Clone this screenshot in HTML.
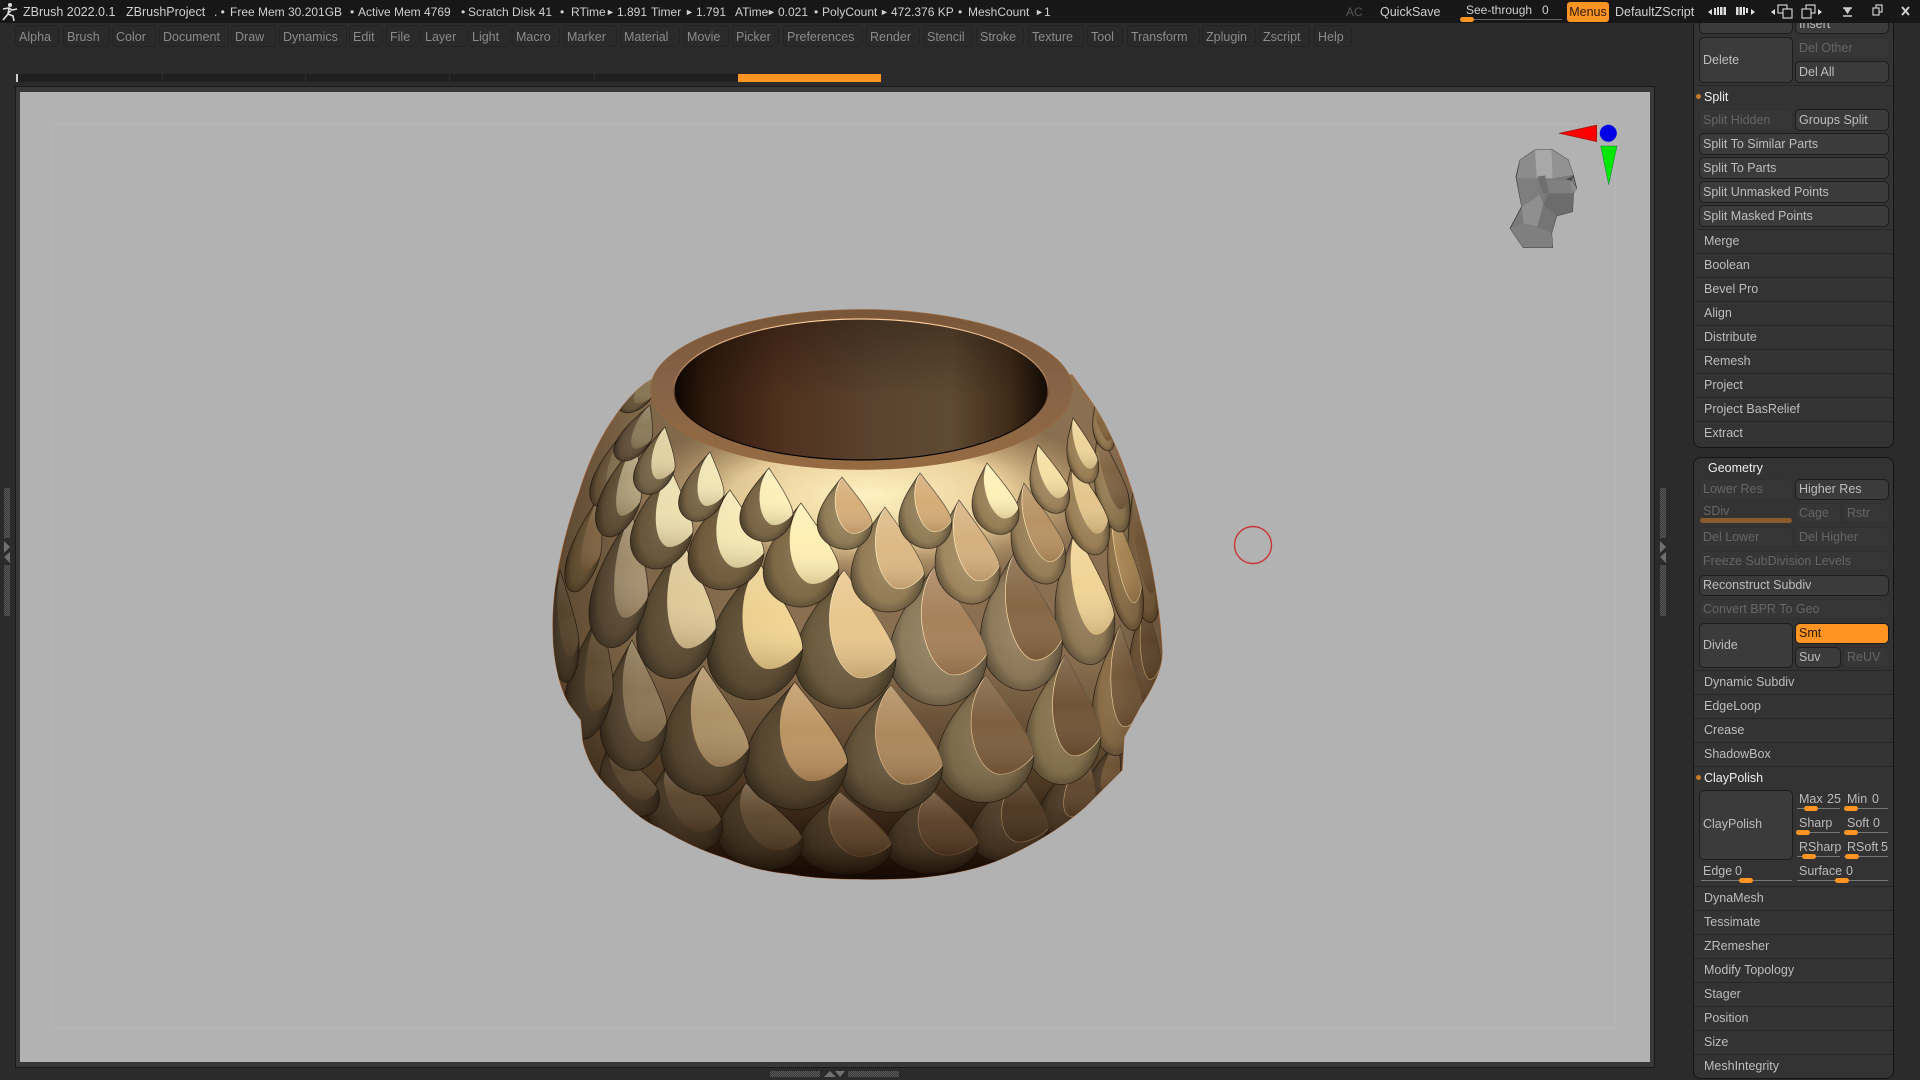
<!DOCTYPE html>
<html><head><meta charset="utf-8"><title>ZBrush</title>
<style>
html,body{margin:0;padding:0;width:1920px;height:1080px;overflow:hidden;background:#2b2b2b;font-family:"Liberation Sans",sans-serif;font-size:12.5px}
div,span{position:absolute;box-sizing:border-box;white-space:nowrap}
.t{color:#cfcfcf;top:3px;line-height:18px;font-size:12px}
.a{font-size:9px}
.m{top:25px;height:22px;background:#2a2a2a;border:1px solid #232323;border-radius:4px;color:#8b8b8b;line-height:22px;padding-left:3px;font-size:12.5px}
.b{background:#3b3b3b;border:1px solid #1c1c1c;border-radius:5px;color:#bdbdbd;padding-left:3px;line-height:20px}
.d{background:#363636;border:1px solid #303030;border-radius:5px;color:#666;padding-left:3px;line-height:20px}
.r{left:1694px;width:199px;height:24px;border-top:1px solid #272727;color:#bdbdbd;padding-left:10px;line-height:22px}
.l{color:#bbb;line-height:16px}
.s{height:1px;background:#777}
.k{width:14px;height:5px;background:#ff9422;border-radius:3px}
.g{background:repeating-conic-gradient(#5e5e5e 0 25%,#343434 0 50%) 0 0/2px 2px}
.o{width:5px;height:5px;border-radius:50%;background:#c87a28}
</style></head>
<body>
<!-- canvas frame -->
<div style="left:15px;top:86px;width:1640px;height:982px;background:#383838;border:1px solid #191919"></div>
<div style="left:20px;top:92px;width:1630px;height:970px;background:#b2b2b2"></div>
<div style="left:51px;top:124px;width:1565px;height:905px;border:1px solid #b6b6b6"></div>
<!-- progress -->
<div style="left:16px;top:74px;width:2px;height:8px;background:#ccc"></div>
<div style="left:18px;top:74px;width:720px;height:8px;background:#1f1f1f"></div>
<div style="left:162px;top:74px;width:1px;height:8px;background:#2b2b2b"></div>
<div style="left:305px;top:74px;width:1px;height:8px;background:#2b2b2b"></div>
<div style="left:449px;top:74px;width:1px;height:8px;background:#2b2b2b"></div>
<div style="left:594px;top:74px;width:1px;height:8px;background:#2b2b2b"></div>
<div style="left:738px;top:74px;width:143px;height:8px;background:#ff9422"></div>
<!-- menu row -->
<div class="m" style="left:15px;width:44px">Alpha</div>
<div class="m" style="left:63px;width:47px">Brush</div>
<div class="m" style="left:112px;width:44px">Color</div>
<div class="m" style="left:159px;width:70px">Document</div>
<div class="m" style="left:231px;width:45px">Draw</div>
<div class="m" style="left:279px;width:68px">Dynamics</div>
<div class="m" style="left:349px;width:34px">Edit</div>
<div class="m" style="left:386px;width:34px">File</div>
<div class="m" style="left:421px;width:46px">Layer</div>
<div class="m" style="left:468px;width:43px">Light</div>
<div class="m" style="left:512px;width:48px">Macro</div>
<div class="m" style="left:563px;width:54px">Marker</div>
<div class="m" style="left:620px;width:60px">Material</div>
<div class="m" style="left:683px;width:46px">Movie</div>
<div class="m" style="left:732px;width:47px">Picker</div>
<div class="m" style="left:783px;width:80px">Preferences</div>
<div class="m" style="left:866px;width:54px">Render</div>
<div class="m" style="left:923px;width:50px">Stencil</div>
<div class="m" style="left:976px;width:48px">Stroke</div>
<div class="m" style="left:1028px;width:56px">Texture</div>
<div class="m" style="left:1087px;width:36px">Tool</div>
<div class="m" style="left:1127px;width:73px">Transform</div>
<div class="m" style="left:1202px;width:54px">Zplugin</div>
<div class="m" style="left:1259px;width:51px">Zscript</div>
<div class="m" style="left:1314px;width:38px">Help</div>
<!-- grips -->
<div class="g" style="left:4px;top:488px;width:6px;height:50px"></div>
<div class="g" style="left:4px;top:565px;width:6px;height:51px"></div>
<div class="g" style="left:1660px;top:488px;width:6px;height:50px"></div>
<div class="g" style="left:1660px;top:565px;width:6px;height:51px"></div>
<div class="g" style="left:770px;top:1071px;width:50px;height:6px"></div>
<div class="g" style="left:848px;top:1071px;width:51px;height:6px"></div>
<svg style="position:absolute;left:0;top:0" width="1920" height="1080" viewBox="0 0 1920 1080">
<defs>
<radialGradient id="sh" cx=".5" cy=".55" r=".6">
<stop offset="0" stop-color="#fff" stop-opacity=".08"/><stop offset=".6" stop-color="#000" stop-opacity=".06"/><stop offset="1" stop-color="#000" stop-opacity=".58"/>
</radialGradient>
<linearGradient id="cg" x1="0" y1="0" x2="0" y2="1">
<stop offset="0" stop-color="#fff" stop-opacity=".16"/><stop offset=".5" stop-color="#fff" stop-opacity="0"/><stop offset="1" stop-color="#3a1e06" stop-opacity=".18"/>
</linearGradient>
<symbol id="s" overflow="visible">
<path d="M0,0C-.18,.16 -.54,.42 -.54,.68C-.54,.88 -.27,1.02 0,1.02C.27,1.02 .54,.86 .54,.64C.54,.5 .14,.14 0,0Z" fill="currentColor" stroke="none"/>
<path d="M0,0C-.18,.16 -.54,.42 -.54,.68C-.54,.88 -.27,1.02 0,1.02C.27,1.02 .54,.86 .54,.64C.54,.5 .14,.14 0,0Z" fill="url(#sh)" stroke="none"/>
<path d="M0,0C.14,.14 .54,.5 .54,.64C.44,.74 .26,.81 .12,.79C-.08,.74 -.2,.5 -.15,.26C-.12,.13 -.04,.04 0,0Z" vector-effect="non-scaling-stroke" stroke-width=".7"/>
<path d="M0,0C.14,.14 .54,.5 .54,.64C.44,.74 .26,.81 .12,.79C-.08,.74 -.2,.5 -.15,.26C-.12,.13 -.04,.04 0,0Z" fill="url(#cg)" stroke="none"/>
<path d="M0,0C-.18,.16 -.54,.42 -.54,.68C-.54,.88 -.27,1.02 0,1.02C.27,1.02 .54,.86 .54,.64C.54,.5 .14,.14 0,0Z" fill="none" stroke="#120a04" stroke-opacity=".65" stroke-width=".8" vector-effect="non-scaling-stroke"/>
</symbol>
<path id="bd" d="M651,380C625,395 595,440 580,490C562,540 552,590 553,630C553,660 560,690 570,705L581,720L583,742C590,770 605,785 614,792C630,810 645,822 660,828C680,840 705,852 726,858C750,868 770,872 791,874C820,880 880,880 915,878C960,874 990,866 1020,850C1050,835 1070,820 1085,807L1122,770L1124,737L1140,707C1155,685 1163,665 1162,650C1160,610 1152,560 1140,520C1128,470 1108,425 1090,400L1072,375Z"/>
<clipPath id="bc"><use href="#bd"/></clipPath>
<linearGradient id="bot" x1="0" y1="0" x2="0" y2="1">
<stop offset="0" stop-color="#1a0b02" stop-opacity="0"/><stop offset=".55" stop-color="#1a0b02" stop-opacity=".1"/><stop offset=".86" stop-color="#1a0b02" stop-opacity=".5"/><stop offset="1" stop-color="#140802" stop-opacity=".97"/>
</linearGradient>
<linearGradient id="base" x1="0" y1="0" x2="0" y2="1">
<stop offset="0" stop-color="#2a1808" stop-opacity="0"/><stop offset=".5" stop-color="#2a1808" stop-opacity=".5"/><stop offset="1" stop-color="#1a0c02" stop-opacity=".95"/>
</linearGradient>
<radialGradient id="glow" cx=".5" cy=".5" r=".5">
<stop offset="0" stop-color="#fff2c2"/><stop offset=".55" stop-color="#f4d9a2" stop-opacity=".9"/><stop offset="1" stop-color="#c9a572" stop-opacity="0"/>
</radialGradient>
<linearGradient id="side" x1="0" y1="0" x2="1" y2="0">
<stop offset="0" stop-color="#140a02" stop-opacity=".42"/><stop offset=".14" stop-color="#140a02" stop-opacity=".1"/><stop offset=".4" stop-color="#000" stop-opacity="0"/><stop offset=".9" stop-color="#000" stop-opacity="0"/><stop offset="1" stop-color="#1a0c02" stop-opacity=".3"/>
</linearGradient>
<linearGradient id="rim" x1="0" y1="0" x2="0" y2="1">
<stop offset="0" stop-color="#7a5638"/><stop offset=".5" stop-color="#866447"/><stop offset="1" stop-color="#966b42"/>
</linearGradient>
<linearGradient id="hole" x1="0" y1="0" x2="1" y2="0">
<stop offset="0" stop-color="#0c0501"/><stop offset=".08" stop-color="#2c180b"/><stop offset=".28" stop-color="#4f301e"/><stop offset=".55" stop-color="#5a4430"/><stop offset=".74" stop-color="#5f4a33"/><stop offset=".9" stop-color="#3f2a18"/><stop offset="1" stop-color="#120a04"/>
</linearGradient>
<linearGradient id="holet" x1="0" y1="0" x2="0" y2="1">
<stop offset="0" stop-color="#0f0702" stop-opacity=".32"/><stop offset=".55" stop-color="#0f0702" stop-opacity="0"/>
</linearGradient>
<linearGradient id="hs" x1="0" y1="0" x2="0" y2="1">
<stop offset="0" stop-color="#ffd0a0"/><stop offset=".45" stop-color="#a87850"/><stop offset=".6" stop-color="#1a0a02"/><stop offset="1" stop-color="#000"/>
</linearGradient>
</defs>
<!-- vase -->
<use href="#bd" fill="#8a7050" stroke="#a4663a" stroke-width="1"/>
<g clip-path="url(#bc)">
<ellipse cx="870" cy="495" rx="250" ry="85" fill="url(#glow)"/>
<rect x="540" y="660" width="640" height="225" fill="url(#base)"/>
<!-- row 5 -->
<g>
<use href="#s" color="#56442f" fill="#7a5e3c" transform="matrix(30 0 -23 65 1118 740)"/>
<use href="#s" color="#5f4d34" fill="#6f5538" stroke="#e0b27c" transform="matrix(50 0 -30 80 1087 753)"/>
<use href="#s" color="#6c593f" fill="#654d33" stroke="#e0b27c" transform="matrix(72 0 -16 87 1020 773)"/>
<use href="#s" color="#68573e" fill="#826344" stroke="#d8aa78" transform="matrix(86 0 0 82 932 790)"/>
<use href="#s" color="#635338" fill="#8c6c49" stroke="#cfa272" transform="matrix(86 0 8 81 840 792)"/>
<use href="#s" color="#5f4f36" fill="#836a49" transform="matrix(78 0 22 85 746 783)"/>
<use href="#s" color="#5f4e36" fill="#786144" transform="matrix(68 0 26 87 668 763)"/>
<use href="#s" color="#574632" fill="#6e593e" transform="matrix(52 0 30 73 610 742)"/>
</g>
<!-- row 4 -->
<g>
<use href="#s" color="#7f6240" fill="#735738" stroke="#e8c084" transform="matrix(30 0 0 100 1145 600)"/>
<use href="#s" color="#977950" fill="#80623f" stroke="#ffd9a0" transform="matrix(47 0 -4 128 1120 625)"/>
<use href="#s" color="#958058" fill="#755839" stroke="#ffdca6" transform="matrix(70 0 -3 127 1065 655)"/>
<use href="#s" color="#8e7a56" fill="#846543" stroke="#f6d096" transform="matrix(90 0 -1 125 986 675)"/>
<use href="#s" color="#726044" fill="#b89264" stroke="#f0cc96" transform="matrix(96 0 0 125 891 685)"/>
<use href="#s" color="#645238" fill="#c89f6a" transform="matrix(96 0 1 125 795 682)"/>
<use href="#s" color="#645238" fill="#c0a272" transform="matrix(82 0 3 127 703 666)"/>
<use href="#s" color="#64533b" fill="#9e8762" transform="matrix(62 0 2 128 632 640)"/>
<use href="#s" color="#5f4f37" fill="#7a6344" transform="matrix(44 0 -17 125 600 612)"/>
</g>
<!-- row 3 -->
<g>
<use href="#s" color="#8f7049" fill="#846441" transform="matrix(28 0 17 130 1133 490)"/>
<use href="#s" color="#9c7d52" fill="#b8925c" stroke="#ffdfa6" transform="matrix(30 0 21 123 1112 505)"/>
<use href="#s" color="#98805a" fill="#f0d496" transform="matrix(55 0 15 132 1075 530)"/>
<use href="#s" color="#988260" fill="#866745" stroke="#ffe0a8" transform="matrix(76 0 11 135 1014 553)"/>
<use href="#s" color="#968362" fill="#a6815a" stroke="#ffe4ae" transform="matrix(91 0 6 136 934 567)"/>
<use href="#s" color="#736142" fill="#e8c68c" stroke="#ffeabb" transform="matrix(94 0 2 136 844 570)"/>
<use href="#s" color="#665439" fill="#f3d694" transform="matrix(88 0 -6 135 759 562)"/>
<use href="#s" color="#68563c" fill="#eed8a4" transform="matrix(73 0 -10 134 683 542)"/>
<use href="#s" color="#6c5a42" fill="#b6a07c" transform="matrix(53 0 -20 132 632 513)"/>
<use href="#s" color="#64533b" fill="#7c6647" transform="matrix(28 0 6 110 560 570)"/>
</g>
<!-- row 2 -->
<g>
<use href="#s" color="#8a7049" fill="#a4835a" transform="matrix(30 0 -25 95 600 495)"/>
<use href="#s" color="#83694a" fill="#9a8561" transform="matrix(30 0 -25 75 625 430)"/>
<use href="#s" color="#9c8359" fill="#846745" transform="matrix(30 0 22 100 1098 430)"/>
<use href="#s" color="#a3875c" fill="#e4c68c" transform="matrix(39 0 22 93 1073 460)"/>
<use href="#s" color="#a0865e" fill="#b89364" stroke="#ffe6ac" transform="matrix(49 0 22 99 1024 483)"/>
<use href="#s" color="#a88e64" fill="#d5b07e" stroke="#ffeebb" transform="matrix(60 0 13 102 959 500)"/>
<use href="#s" color="#9c845c" fill="#dcb884" stroke="#fff0c0" transform="matrix(68 0 4 103 885 507)"/>
<use href="#s" color="#87704b" fill="#ffefb4" transform="matrix(70 0 0 102 801 503)"/>
<use href="#s" color="#7e6644" fill="#fff2bc" transform="matrix(70 0 -6 98 730 490)"/>
<use href="#s" color="#786444" fill="#fff1be" transform="matrix(57 0 -14 97 671 470)"/>
<use href="#s" color="#756245" fill="#c6b58c" transform="matrix(39 0 -26 93 636 442)"/>
</g>
<!-- row 1 -->
<g>
<use href="#s" color="#745f42" fill="#92815c" transform="matrix(28 0 -23 40 651 372)"/>
<use href="#s" color="#715d46" fill="#988764" transform="matrix(32 0 -25 55 650 405)"/>
<use href="#s" color="#997c53" fill="#82643c" transform="matrix(18 0 13 45 1095 405)"/>
<use href="#s" color="#a2855a" fill="#eed49a" transform="matrix(28 0 15 64 1073 418)"/>
<use href="#s" color="#a58a61" fill="#f5e0a4" transform="matrix(35 0 18 67 1038 445)"/>
<use href="#s" color="#9f865c" fill="#fff0b8" transform="matrix(43 0 13 70 987 463)"/>
<use href="#s" color="#9a845d" fill="#d5ac76" stroke="#ffefbe" transform="matrix(49 0 8 74 920 473)"/>
<use href="#s" color="#9a845d" fill="#d6ae7a" stroke="#ffefbe" transform="matrix(51 0 4 71 842 477)"/>
<use href="#s" color="#846e4b" fill="#fff2bb" transform="matrix(49 0 -4 72 769 468)"/>
<use href="#s" color="#86704e" fill="#fff3c0" transform="matrix(41 0 -13 68 710 452)"/>
<use href="#s" color="#857252" fill="#f4e4b0" transform="matrix(37 0 -16 66 665 427)"/>
</g>
<rect x="540" y="640" width="640" height="245" fill="url(#bot)"/>
<rect x="550" y="370" width="615" height="510" fill="url(#side)"/>
</g>
<!-- rim -->
<ellipse cx="861.5" cy="389.5" rx="211" ry="80" fill="url(#rim)" stroke="#96683f" stroke-width=".8"/>
<ellipse cx="861" cy="389.5" rx="187" ry="70.5" fill="url(#hole)" stroke="url(#hs)" stroke-width="1.2"/>
<ellipse cx="861" cy="389.5" rx="186" ry="70" fill="url(#holet)"/>
<!-- head and gizmo -->
<polygon points="1559,133.3 1596.7,125 1596.7,141.7" fill="#f00" stroke="#600" stroke-width=".4"/>
<circle cx="1608.3" cy="133.3" r="8.5" fill="#0000e6"/>
<polygon points="1600.7,146 1617,146 1608.7,184.7" fill="#00e800" stroke="#063" stroke-width=".4"/>
<g transform="translate(1480 110) scale(.3333)">
<polygon points="120,150 165,120 215,118 265,150 280,195 290,235 280,250 278,305 230,318 215,370 218,413 130,413 90,355 125,290 108,200" fill="#7a7a7a" stroke="#2a2a2a" stroke-width="2"/>
<polygon points="120,150 165,120 170,205 110,205" fill="#8c8c8c"/>
<polygon points="165,120 215,118 218,205 170,205" fill="#a8a8a8"/>
<polygon points="215,118 265,150 280,195 218,205" fill="#929292"/>
<polygon points="110,205 170,205 180,265 125,290" fill="#7e7e7e"/>
<polygon points="170,205 280,212 278,250 205,250" fill="#808080"/>
<polygon points="205,250 280,250 278,305 230,318 190,285" fill="#6c6c6c"/>
<polygon points="125,290 180,255 190,285 172,350 130,340" fill="#8f8f8f"/>
<polygon points="190,285 230,318 215,370 172,350" fill="#757575"/>
<polygon points="90,355 130,340 215,370 218,413 130,413" fill="#7f7f7f"/>
<polygon points="172,200 195,196 208,250 190,250" fill="#6f6f6f"/>
<polygon points="258,208 282,197 274,213" fill="#4a4a4a"/>
<polygon points="272,215 292,238 278,250" fill="#8e8e8e"/>
</g>
<circle cx="1253" cy="545" r="18.5" fill="none" stroke="#c9363a" stroke-width="1.4"/>
<!-- grip triangles -->
<g fill="#707070">
<polygon points="1660,541 1666,547 1660,553"/><polygon points="1666,552 1660,557 1666,563"/>
<polygon points="4,541 10,547 4,553"/><polygon points="10,552 4,557 10,563"/>
<polygon points="824,1077 830,1071 836,1077"/><polygon points="835,1071 845,1071 840,1077"/>
</g>
</svg>
<!-- right panels -->
<div style="left:1693px;top:10px;width:201px;height:438px;background:#333;border:1px solid #141414;border-radius:8px"></div>
<div style="left:1693px;top:457px;width:201px;height:622px;background:#333;border:1px solid #141414;border-radius:8px"></div>
<div class="b" style="left:1699px;top:12px;width:94px;height:22px"></div>
<div class="b" style="left:1795px;top:12px;width:94px;height:22px;padding-top:1px">Insert</div>
<div class="b" style="left:1699px;top:37px;width:94px;height:46px;line-height:44px">Delete</div>
<div class="d" style="left:1795px;top:37px;width:94px;height:22px">Del Other</div>
<div class="b" style="left:1795px;top:61px;width:94px;height:22px">Del All</div>
<div class="r" style="top:85px;color:#eee;border-top:1px solid #272727">Split</div>
<div class="o" style="left:1696px;top:94px"></div>
<div class="d" style="left:1699px;top:109px;width:94px;height:22px">Split Hidden</div>
<div class="b" style="left:1795px;top:109px;width:94px;height:22px">Groups Split</div>
<div class="b" style="left:1699px;top:133px;width:190px;height:22px">Split To Similar Parts</div>
<div class="b" style="left:1699px;top:157px;width:190px;height:22px">Split To Parts</div>
<div class="b" style="left:1699px;top:181px;width:190px;height:22px">Split Unmasked Points</div>
<div class="b" style="left:1699px;top:205px;width:190px;height:22px">Split Masked Points</div>
<div class="r" style="top:229px">Merge</div>
<div class="r" style="top:253px">Boolean</div>
<div class="r" style="top:277px">Bevel Pro</div>
<div class="r" style="top:301px">Align</div>
<div class="r" style="top:325px">Distribute</div>
<div class="r" style="top:349px">Remesh</div>
<div class="r" style="top:373px">Project</div>
<div class="r" style="top:397px">Project BasRelief</div>
<div class="r" style="top:421px">Extract</div>
<div class="l" style="left:1708px;top:460px;color:#eee">Geometry</div>
<div class="d" style="left:1699px;top:479px;width:94px;height:21px;line-height:18px">Lower Res</div>
<div class="b" style="left:1795px;top:479px;width:94px;height:21px;line-height:18px">Higher Res</div>
<div class="l" style="left:1703px;top:503px;color:#666">SDiv</div>
<div style="left:1700px;top:518px;width:92px;height:5px;background:#8a5c2c;border-radius:3px"></div>
<div class="d" style="left:1795px;top:503px;width:46px;height:20px;line-height:18px">Cage</div>
<div class="d" style="left:1843px;top:503px;width:46px;height:20px;line-height:18px">Rstr</div>
<div class="d" style="left:1699px;top:527px;width:94px;height:20px;line-height:18px">Del Lower</div>
<div class="d" style="left:1795px;top:527px;width:94px;height:20px;line-height:18px">Del Higher</div>
<div class="d" style="left:1699px;top:551px;width:190px;height:20px;line-height:18px">Freeze SubDivision Levels</div>
<div class="b" style="left:1699px;top:575px;width:190px;height:21px;line-height:18px">Reconstruct Subdiv</div>
<div class="d" style="left:1699px;top:599px;width:190px;height:20px;line-height:18px">Convert BPR To Geo</div>
<div class="b" style="left:1699px;top:623px;width:94px;height:45px;line-height:43px">Divide</div>
<div class="b" style="left:1795px;top:623px;width:94px;height:21px;line-height:18px;background:#ff9422;color:#2a1a08">Smt</div>
<div class="b" style="left:1795px;top:647px;width:46px;height:21px;line-height:18px">Suv</div>
<div class="d" style="left:1843px;top:647px;width:46px;height:21px;line-height:18px">ReUV</div>
<div class="r" style="top:670px">Dynamic Subdiv</div>
<div class="r" style="top:694px">EdgeLoop</div>
<div class="r" style="top:718px">Crease</div>
<div class="r" style="top:742px">ShadowBox</div>
<div class="r" style="top:766px;color:#eee">ClayPolish</div>
<div class="o" style="left:1696px;top:775px"></div>
<div class="b" style="left:1699px;top:790px;width:94px;height:70px;line-height:66px">ClayPolish</div>
<div class="l" style="left:1799px;top:791px">Max</div><div class="l" style="left:1827px;top:791px">25</div>
<div class="l" style="left:1847px;top:791px">Min</div><div class="l" style="left:1872px;top:791px">0</div>
<div class="s" style="left:1797px;top:808px;width:43px"></div><div class="k" style="left:1804px;top:806px"></div>
<div class="s" style="left:1844px;top:808px;width:44px"></div><div class="k" style="left:1844px;top:806px"></div>
<div class="l" style="left:1799px;top:815px">Sharp</div>
<div class="l" style="left:1847px;top:815px">Soft</div><div class="l" style="left:1873px;top:815px">0</div>
<div class="s" style="left:1797px;top:832px;width:43px"></div><div class="k" style="left:1796px;top:830px"></div>
<div class="s" style="left:1844px;top:832px;width:44px"></div><div class="k" style="left:1844px;top:830px"></div>
<div class="l" style="left:1799px;top:839px">RSharp</div>
<div class="l" style="left:1847px;top:839px">RSoft</div><div class="l" style="left:1881px;top:839px">5</div>
<div class="s" style="left:1797px;top:856px;width:43px"></div><div class="k" style="left:1802px;top:854px"></div>
<div class="s" style="left:1844px;top:856px;width:44px"></div><div class="k" style="left:1845px;top:854px"></div>
<div class="l" style="left:1703px;top:863px">Edge</div><div class="l" style="left:1735px;top:863px">0</div>
<div class="l" style="left:1799px;top:863px">Surface</div><div class="l" style="left:1846px;top:863px">0</div>
<div class="s" style="left:1701px;top:880px;width:91px"></div><div class="k" style="left:1739px;top:878px"></div>
<div class="s" style="left:1797px;top:880px;width:91px"></div><div class="k" style="left:1835px;top:878px"></div>
<div class="r" style="top:886px">DynaMesh</div>
<div class="r" style="top:910px">Tessimate</div>
<div class="r" style="top:934px">ZRemesher</div>
<div class="r" style="top:958px">Modify Topology</div>
<div class="r" style="top:982px">Stager</div>
<div class="r" style="top:1006px">Position</div>
<div class="r" style="top:1030px">Size</div>
<div class="r" style="top:1054px">MeshIntegrity</div>
<!-- top bar -->
<div style="left:0;top:0;width:1920px;height:23px;background:#171717"></div>
<svg style="position:absolute;left:0;top:0" width="20" height="23" viewBox="0 0 20 23"><circle cx="10" cy="5" r="2" fill="#ddd"/><path d="M3,9L9,8L12,10L17,9M9,8L8,14L3,20M8,14L13,16L14,21M11,11L8,13" fill="none" stroke="#ddd" stroke-width="1.6"/></svg>
<div class="t" style="left:23px;font-size:12.5px">ZBrush 2022.0.1</div>
<div class="t" style="left:126px;font-size:12.5px">ZBrushProject</div>
<div class="t" style="left:214px">. •</div>
<div class="t" style="left:230px">Free Mem 30.201GB</div>
<div class="t" style="left:350px">•</div>
<div class="t" style="left:358px">Active Mem 4769</div>
<div class="t" style="left:461px">•</div>
<div class="t" style="left:468px">Scratch Disk 41</div>
<div class="t" style="left:560px">•</div>
<div class="t" style="left:571px">RTime</div>
<div class="t a" style="left:606px">►</div>
<div class="t" style="left:617px">1.891</div>
<div class="t" style="left:651px">Timer</div>
<div class="t a" style="left:685px">►</div>
<div class="t" style="left:696px">1.791</div>
<div class="t" style="left:735px">ATime</div>
<div class="t a" style="left:767px">►</div>
<div class="t" style="left:778px">0.021</div>
<div class="t" style="left:814px">•</div>
<div class="t" style="left:822px">PolyCount</div>
<div class="t a" style="left:880px">►</div>
<div class="t" style="left:891px">472.376 KP</div>
<div class="t" style="left:958px">•</div>
<div class="t" style="left:968px">MeshCount</div>
<div class="t a" style="left:1035px">►</div>
<div class="t" style="left:1044px">1</div>
<div class="t" style="left:1346px;color:#555">AC</div>
<div class="t" style="left:1380px;font-size:12.5px">QuickSave</div>
<div class="t" style="left:1466px;top:1px">See-through</div>
<div class="t" style="left:1542px;top:1px">0</div>
<div style="left:1462px;top:19px;width:100px;height:1px;background:#666"></div>
<div class="k" style="left:1460px;top:17px;height:5px"></div>
<div style="left:1567px;top:2px;width:42px;height:20px;background:#ff9422;border-radius:3px;color:#2a1a08;text-align:center;line-height:20px">Menus</div>
<div class="t" style="left:1615px;font-size:12.5px">DefaultZScript</div>
<svg style="position:absolute;left:1700px;top:0" width="220" height="23" viewBox="0 0 220 23">
<g fill="#ddd"><polygon points="8,12 12,9 12,15"/><rect x="14" y="8" width="2" height="7"/><rect x="17" y="7" width="2" height="8"/><rect x="20" y="7" width="2.5" height="8"/><rect x="23.5" y="7" width="2.5" height="8"/>
<rect x="36" y="7" width="2.5" height="8"/><rect x="39.5" y="7" width="2.5" height="8"/><rect x="43" y="7" width="2" height="8"/><rect x="46" y="8" width="2" height="5"/><polygon points="51,9 55,12 51,15"/>
<polygon points="71,12 75,9 75,15"/><polygon points="118,9 122,12 118,15"/></g>
<g fill="none" stroke="#ccc" stroke-width="1.2"><rect x="78" y="5" width="9" height="8"/><rect x="83" y="9" width="9" height="9" fill="#171717"/><rect x="106" y="5" width="9" height="8" fill="#171717"/><rect x="102" y="9" width="9" height="9" fill="#171717"/>
<path d="M143,8H152M143,16H152" stroke-width="1.6"/><path d="M145,9L147.5,13L150,9Z" fill="#ccc"/>
<rect x="173" y="8" width="6" height="7"/><path d="M176,8V5H182V12H179"/><path d="M202,7L209,15M209,7L202,15" stroke-width="2"/></g>
</svg>
</body></html>
